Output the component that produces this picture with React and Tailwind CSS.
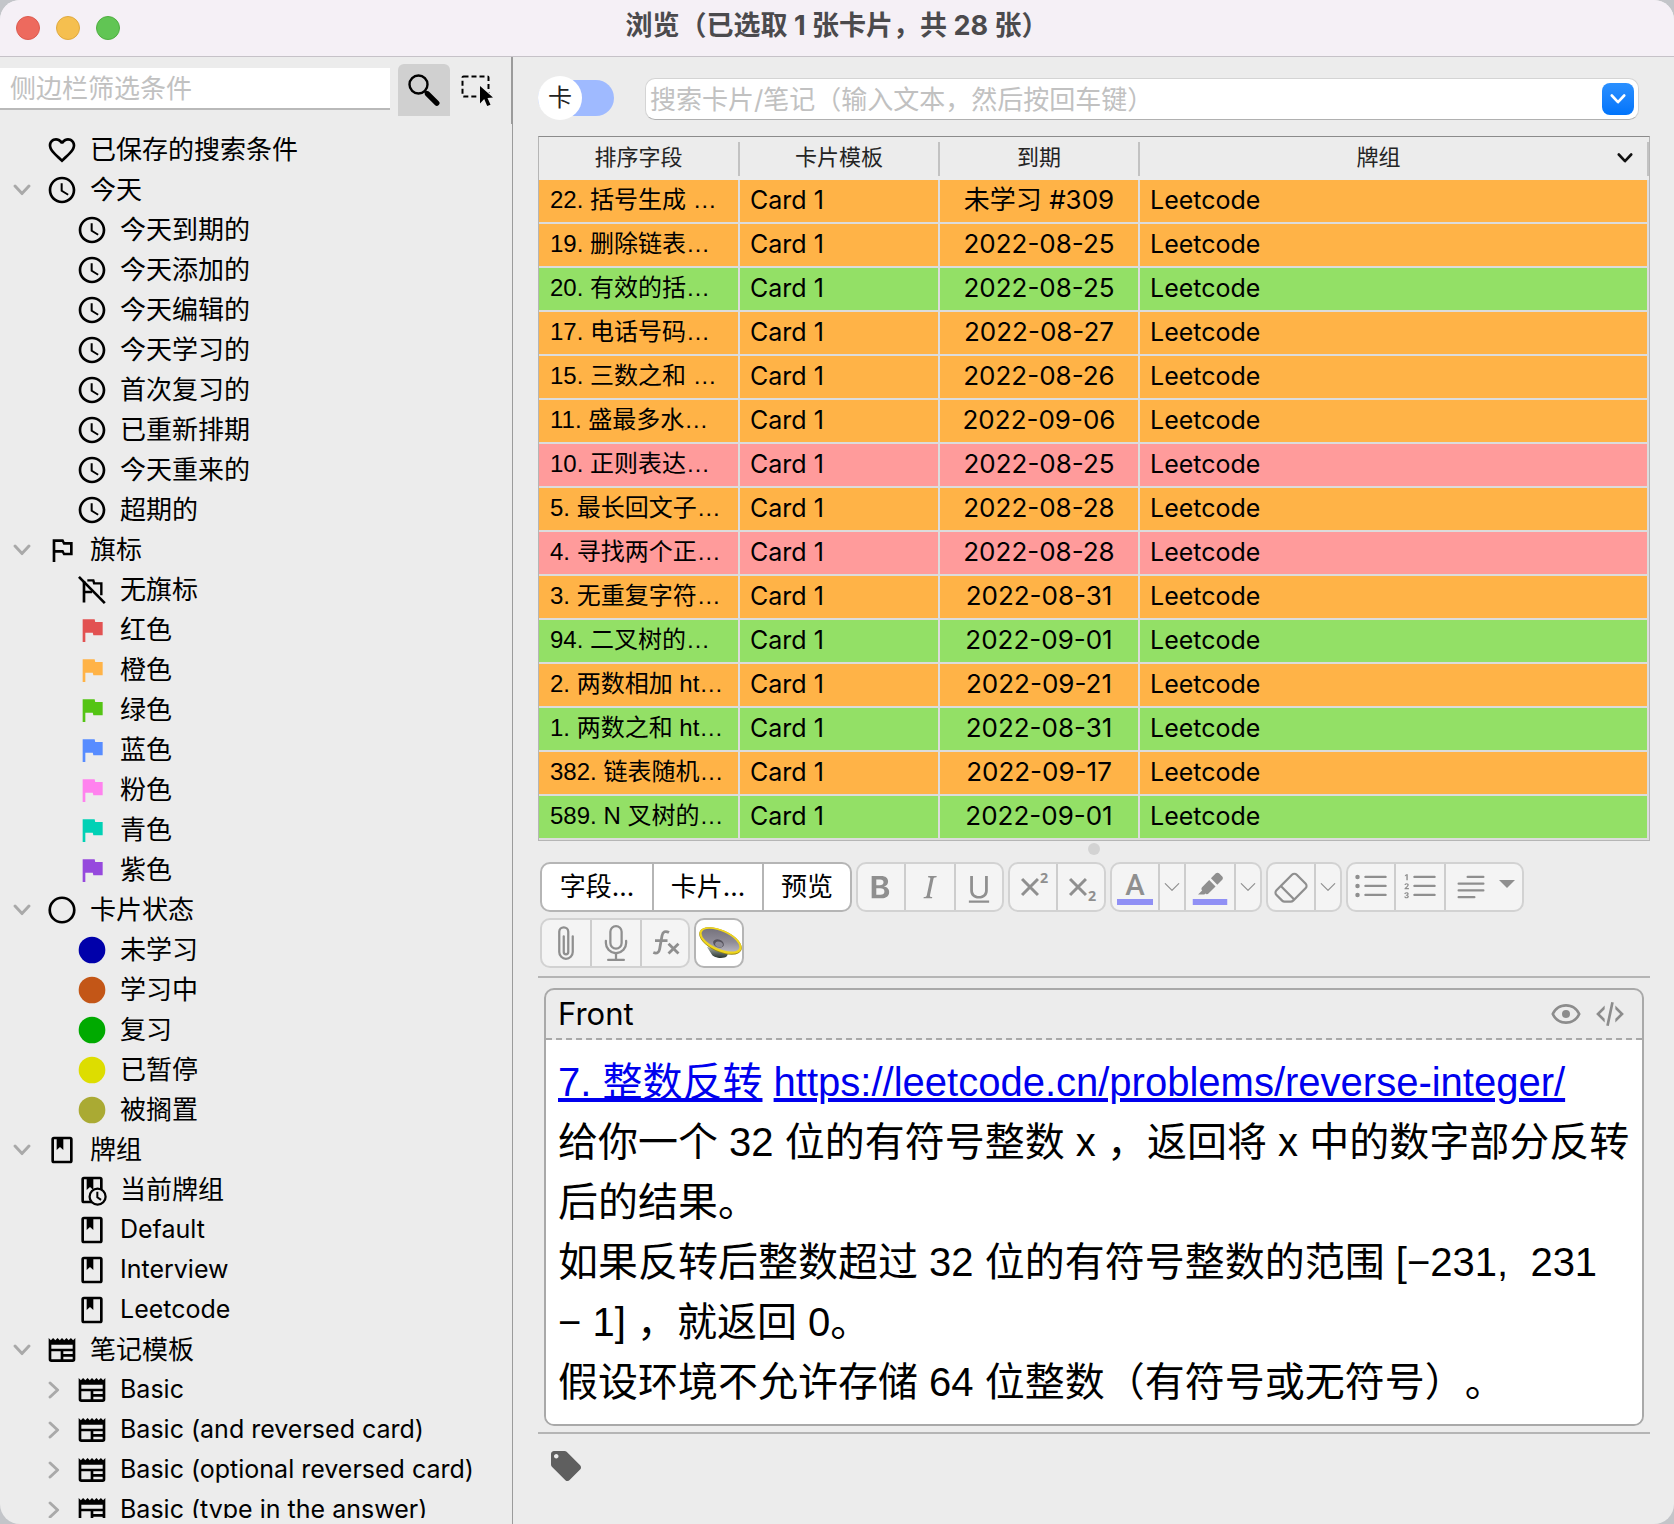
import React from "react";
import {
  MdFavoriteBorder,
  MdAccessTime,
  MdOutlinedFlag,
  MdFlag,
  MdLocalOffer,
} from "react-icons/md";
import {
  BsTypeBold,
  BsTypeItalic,
  BsTypeUnderline,
  BsChevronDown,
  BsEraser,
  BsListUl,
  BsListOl,
  BsTextParagraph,
  BsPaperclip,
  BsMic,
} from "react-icons/bs";

/* ---------- icons ---------- */

const Clock = () => <MdAccessTime className="size-8" />;
const Heart = () => <MdFavoriteBorder className="size-8" />;
const FlagOutline = () => <MdOutlinedFlag className="size-8" />;

const FlagOff = () => (
  <svg viewBox="0 0 24 24" className="size-8" fill="none" stroke="currentColor">
    <path d="M6 21.3V5.5M6 13.5h6" strokeWidth="2" />
    <path d="M8.5 4.8H13l.6 2.2H19v9" strokeWidth="1.8" />
    <path d="M2.2 2.2L21.6 21.8" strokeWidth="2" />
  </svg>
);

const CircleOutline = () => (
  <svg viewBox="0 0 24 24" className="size-8" fill="none" stroke="currentColor" strokeWidth="2">
    <circle cx="12" cy="12" r="9.2" />
  </svg>
);

const Disc = ({ color }) => (
  <svg viewBox="0 0 24 24" className="size-8" fill={color}>
    <circle cx="12" cy="12" r="10" />
  </svg>
);

const BOOK =
  "M18 2a2 2 0 0 1 2 2v16a2 2 0 0 1-2 2H6a2 2 0 0 1-2-2V4a2 2 0 0 1 2-2h12m0 2h-5v8l-2.5-2.25L8 12V4H6v16h12V4z";

const Book = () => (
  <svg viewBox="0 0 24 24" className="size-8" fill="currentColor" fillRule="evenodd">
    <path d={BOOK} />
  </svg>
);

const BookClock = () => (
  <svg viewBox="0 0 24 24" className="size-8 overflow-visible" fill="currentColor">
    <path fillRule="evenodd" d={BOOK} />
    <circle cx="16.2" cy="17" r="6" fill="#ececec" stroke="currentColor" strokeWidth="1.7" />
    <path d="M16 13.4v4l2.8 2" fill="none" stroke="currentColor" strokeWidth="1.5" />
  </svg>
);

const Newspaper = () => (
  <svg viewBox="0 0 24 24" className="size-8" fill="currentColor" fillRule="evenodd">
    <path d="M20 11H4V8h16v3zm0 4h-7v-2h7v2zm0 4h-7v-2h7v2zm-9 0H4v-6h7v6zM20.33 4.67L18.67 3 17 4.67 15.33 3l-1.66 1.67L12 3l-1.67 1.67L8.67 3 7 4.67 5.33 3 3.67 4.67 2 3v16a2 2 0 0 0 2 2h16a2 2 0 0 0 2-2V3l-1.67 1.67z" />
  </svg>
);

const Magnifier = () => (
  <svg viewBox="0 0 32 32" className="size-8" fill="none" stroke="currentColor">
    <circle cx="10.5" cy="10.5" r="9" strokeWidth="2.4" />
    <path d="M17.2 17.5l3 3" strokeWidth="3" />
    <path d="M19.5 19.8l9.3 9.3" strokeWidth="5.4" strokeLinecap="round" />
  </svg>
);

const SelectTool = () => (
  <svg viewBox="0 0 32 32" className="size-8">
    <rect x="1.5" y="1.5" width="26" height="20" rx="1" fill="none" stroke="currentColor" strokeWidth="2" strokeDasharray="5 3" />
    <path d="M17 8.500V29.500L22 24l3.600 8 4.800-2.200-3.600-7.600h7z" fill="#ececec" />
    <path d="M19 11v17.500l4.200-4.400 3 7 3.300-1.400-3-6.800 5.500-.3z" fill="currentColor" />
  </svg>
);

const Caret = ({ className }) => (
  <svg viewBox="0 0 16 16" className={className} fill="none" stroke="currentColor" strokeWidth="2.6" strokeLinecap="round" strokeLinejoin="round">
    <path d="M1.800 4.500L8 11.200l6.200-6.700" />
  </svg>
);

const Script = ({ y }) => (
  <svg viewBox="0 0 24 24" className="size-9" stroke="currentColor" strokeWidth="2" fill="none">
    <path d="M4.700 6.700L15.300 17.300M15.300 6.700L4.700 17.300" />
    <text x="16.700" y={y} fontSize="9.500" fontWeight="700" fontFamily="Open Sans, sans-serif" fill="currentColor" stroke="none">2</text>
  </svg>
);

const TextColor = () => (
  <svg viewBox="0 0 24 24" className="size-9">
    <text x="12" y="17" textAnchor="middle" fontSize="19.600" fontWeight="500" fontFamily="Roboto, sans-serif" fill="currentColor">A</text>
    <path d="M0 20h24v4H0z" fill="#9090f5" />
  </svg>
);

const Highlight = () => (
  <svg viewBox="0 0 24 24" className="size-9" fill="currentColor">
    <path d="M4 17l2.750-2.750-.03-.02c-.58-.59-.58-1.540 0-2.120l4.740-4.740 4.240 4.240-4.740 4.740c-.57.580-1.500.580-2.090.020L8.240 17H4M15.910 2.910c.59-.58 1.540-.58 2.120 0l2.130 2.120c.58.590.58 1.540 0 2.130l-3.300 3.290-4.240-4.240 3.290-3.300z" />
    <path d="M.5 20h23v4H.5z" fill="#9090f5" />
  </svg>
);

const Fx = () => (
  <svg viewBox="0 0 36 36" className="size-9" fill="none" stroke="currentColor" strokeWidth="2.800">
    <path d="M22 7.500c-3.500-2-6.200-.8-7 3.200l-2.400 13.500c-.7 3.800-3 4.600-6.300 3.300M8 15.600H20.500" />
    <path d="M21.500 18.800l10 9.800M31.500 18.800l-10 9.800" />
  </svg>
);

const Speaker = () => (
  <svg viewBox="0 0 44 36" className="h-9 w-11 shrink-0 overflow-visible">
    <defs>
      <linearGradient id="cone" x1="0" y1="0" x2="1" y2="1">
        <stop offset="0" stopColor="#6d6a74" />
        <stop offset=".55" stopColor="#8f8c97" />
        <stop offset="1" stopColor="#c9c7d0" />
      </linearGradient>
      <linearGradient id="magnet" x1="0" y1="0" x2="0" y2="1">
        <stop offset="0" stopColor="#a5ada8" />
        <stop offset="1" stopColor="#2a352f" />
      </linearGradient>
    </defs>
    <path d="M10 22l4.500 7c1.500 4 12.500 5.500 15.500 2l2-5z" fill="url(#magnet)" />
    <ellipse cx="23.500" cy="16" rx="22.800" ry="11" transform="rotate(24 23.500 16)" fill="#9a8a14" />
    <ellipse cx="23.500" cy="15.500" rx="22.500" ry="10.600" transform="rotate(24 23.500 15.500)" fill="#efd51d" />
    <ellipse cx="23.500" cy="15.200" rx="20.300" ry="8.600" transform="rotate(24 23.500 15.200)" fill="url(#cone)" />
    <ellipse cx="21.500" cy="18.500" rx="5.500" ry="4" transform="rotate(20 21.500 18.500)" fill="#55525c" />
    <ellipse cx="22" cy="19.500" rx="4" ry="2.800" transform="rotate(20 22 19.500)" fill="#8e8c97" />
  </svg>
);

const Eye = () => (
  <svg viewBox="0 0 24 24" className="size-8" fill="currentColor">
    <path d="M12 9a3 3 0 0 1 3 3 3 3 0 0 1-3 3 3 3 0 0 1-3-3 3 3 0 0 1 3-3m0-4.500c5 0 9.270 3.110 11 7.500-1.730 4.390-6 7.500-11 7.500S2.730 16.390 1 12c1.730-4.390 6-7.500 11-7.500M3.180 12a9.821 9.821 0 0 0 17.640 0 9.821 9.821 0 0 0-17.640 0z" />
  </svg>
);

const Code = () => (
  <svg viewBox="0 0 24 24" className="size-8" fill="currentColor">
    <path d="M12.890 3l1.960.4L11.110 21l-1.960-.4L12.890 3m6.700 9L16 8.410V5.580L22.420 12 16 18.410v-2.830L19.590 12M1.580 12L8 5.580v2.830L4.410 12 8 15.580v2.830L1.580 12z" />
  </svg>
);

/* ---------- data ---------- */

const flag = (color) => <MdFlag className="size-8" color={color} />;

const TREE = [
  { label: "已保存的搜索条件", icon: <Heart />, leaf: true, children: [] },
  {
    label: "今天",
    icon: <Clock />,
    children: ["今天到期的", "今天添加的", "今天编辑的", "今天学习的", "首次复习的", "已重新排期", "今天重来的", "超期的"].map(
      (label) => ({ label, icon: <Clock /> })
    ),
  },
  {
    label: "旗标",
    icon: <FlagOutline />,
    children: [
      { label: "无旗标", icon: <FlagOff /> },
      { label: "红色", icon: flag("#e25252") },
      { label: "橙色", icon: flag("#ffb347") },
      { label: "绿色", icon: flag("#54c414") },
      { label: "蓝色", icon: flag("#578cff") },
      { label: "粉色", icon: flag("#ff82ee") },
      { label: "青色", icon: flag("#00d1b5") },
      { label: "紫色", icon: flag("#9649dd") },
    ],
  },
  {
    label: "卡片状态",
    icon: <CircleOutline />,
    children: [
      { label: "未学习", icon: <Disc color="#0000aa" /> },
      { label: "学习中", icon: <Disc color="#c35617" /> },
      { label: "复习", icon: <Disc color="#00aa00" /> },
      { label: "已暂停", icon: <Disc color="#dddd00" /> },
      { label: "被搁置", icon: <Disc color="#aaaa33" /> },
    ],
  },
  {
    label: "牌组",
    icon: <Book />,
    children: [
      { label: "当前牌组", icon: <BookClock /> },
      { label: "Default", icon: <Book />, latin: true },
      { label: "Interview", icon: <Book />, latin: true },
      { label: "Leetcode", icon: <Book />, latin: true },
    ],
  },
  {
    label: "笔记模板",
    icon: <Newspaper />,
    children: [
      "Basic",
      "Basic (and reversed card)",
      "Basic (optional reversed card)",
      "Basic (type in the answer)",
    ].map((label) => ({ label, icon: <Newspaper />, latin: true, closed: true })),
  },
];

const O = "bg-[#ffb347]";
const G = "bg-[#93e066]";
const R = "bg-[#ff9b9b]";

const CARDS = [
  ["22. 括号生成 …", "未学习 #309", O],
  ["19. 删除链表…", "2022-08-25", O],
  ["20. 有效的括…", "2022-08-25", G],
  ["17. 电话号码…", "2022-08-27", O],
  ["15. 三数之和 …", "2022-08-26", O],
  ["11. 盛最多水…", "2022-09-06", O],
  ["10. 正则表达…", "2022-08-25", R],
  ["5. 最长回文子…", "2022-08-28", O],
  ["4. 寻找两个正…", "2022-08-28", R],
  ["3. 无重复字符…", "2022-08-31", O],
  ["94. 二叉树的…", "2022-09-01", G],
  ["2. 两数相加 ht…", "2022-09-21", O],
  ["1. 两数之和 ht…", "2022-08-31", G],
  ["382. 链表随机…", "2022-09-17", O],
  ["589. N 叉树的…", "2022-09-01", G],
];

/* ---------- sidebar ---------- */

function TreeRow({ item, child }) {
  return (
    <button
      type="button"
      className={`flex h-10 w-full items-center text-left whitespace-nowrap ${child ? "pl-[42px]" : "pl-2.5"}`}
    >
      <span className={`flex w-6 shrink-0 justify-center text-[#a9a9a9] ${child ? "mr-2.5" : "mr-3"}`}>
        {child
          ? item.closed && <Caret className="size-[18px] -rotate-90" />
          : !item.leaf && <Caret className="size-[18px]" />}
      </span>
      <span className="mr-3 shrink-0">{item.icon}</span>
      <span className={item.latin ? "text-[25px]" : "pb-0.5 text-[26px]"}>{item.label}</span>
    </button>
  );
}

function Sidebar() {
  return (
    <aside className="flex w-[513px] shrink-0 flex-col border-r border-[#9b9b9b] pb-1.5">
      <div className="flex h-[67px] shrink-0 items-start border-r border-[#9b9b9b] pt-[7px]">
        <input
          type="text"
          aria-label="侧边栏筛选条件"
          placeholder="侧边栏筛选条件"
          className="mt-1 h-[42px] min-w-0 flex-1 border-b-2 border-[#b9b9b9] bg-white pl-2.5 text-[26px] outline-none placeholder:text-[#c1c1c1]"
        />
        <button type="button" aria-label="搜索" className="ml-2 flex size-[52px] items-center justify-center rounded-t-md bg-[#d0d0d0]">
          <Magnifier />
        </button>
        <button type="button" aria-label="选择" className="mr-[7px] flex size-[54px] items-center justify-center">
          <SelectTool />
        </button>
      </div>
      <nav className="mt-1.5 min-h-0 flex-1 overflow-hidden">
        {TREE.map((group) => (
          <div key={group.label}>
            <TreeRow item={group} />
            {group.children.map((c) => (
              <TreeRow key={c.label} item={c} child />
            ))}
          </div>
        ))}
      </nav>
    </aside>
  );
}

/* ---------- card table ---------- */

function HeaderCell({ children, sorted }) {
  return (
    <th className="h-[43px] p-0 font-normal">
      <div className="flex h-[34px] items-center border-r-2 border-[#c2c2c2] pb-0.5 text-[22px] text-[#242424]">
        <span className="flex-1 text-center">{children}</span>
        {sorted && <Caret className="mr-3.5 size-4 text-[#111]" />}
      </div>
    </th>
  );
}

const CELL = "h-11 border-r-2 border-b-2 border-[#dcdcdc] pt-0 pr-0 pb-0.5 whitespace-nowrap overflow-hidden";

function CardTable() {
  return (
    <div className="border border-t-[#8b8b8b] border-r-[#b5b5b5] border-b-[#b5b5b5] border-l-[#b5b5b5]">
      <table className="w-full table-fixed border-separate border-spacing-0">
        <colgroup>
          <col className="w-[201px]" />
          <col className="w-[200px]" />
          <col className="w-[200px]" />
          <col />
        </colgroup>
        <thead>
          <tr>
            <HeaderCell>排序字段</HeaderCell>
            <HeaderCell>卡片模板</HeaderCell>
            <HeaderCell>到期</HeaderCell>
            <HeaderCell sorted>牌组</HeaderCell>
          </tr>
        </thead>
        <tbody>
          {CARDS.map(([title, due, bg]) => (
            <tr key={title} className={bg}>
              <td className={`${CELL} pl-[11px] font-['Liberation_Sans','Noto_Sans_CJK_SC',sans-serif] text-[24px] leading-8`}>{title}</td>
              <td className={`${CELL} pl-2.5 text-[25px] leading-8`}>Card 1</td>
              <td className={`${CELL} pl-0 text-center text-[26px] leading-8`}>{due}</td>
              <td className={`${CELL} pl-2.5 text-[25px] leading-8`}>Leetcode</td>
            </tr>
          ))}
        </tbody>
      </table>
    </div>
  );
}

/* ---------- editor ---------- */

const Group = ({ children, active }) => (
  <div
    className={
      active
        ? "flex h-[50px] divide-x-2 divide-[#b5b5b5] overflow-hidden rounded-[10px] border-2 border-[#b5b5b5] bg-white"
        : "flex h-[50px] divide-x-2 divide-[#cdcdcd] overflow-hidden rounded-[10px] border-2 border-[#d2d2d2] bg-[#f4f4f4] text-[#8f8f8f]"
    }
  >
    {children}
  </div>
);

const Tool = ({ label, width = "w-12", children }) => (
  <button type="button" aria-label={label} className={`box-content flex shrink-0 items-center justify-center ${width}`}>
    {children}
  </button>
);

const Text = ({ width, children }) => (
  <button type="button" className={`box-content shrink-0 text-center text-[26px] leading-none ${width}`}>
    {children}
  </button>
);

const Drop = ({ label }) => (
  <Tool label={label} width="w-6">
    <BsChevronDown className="size-[18px]" />
  </Tool>
);

function Toolbar() {
  return (
    <div className="ml-0.5 flex flex-wrap gap-x-1 gap-y-1.5">
      <Group active>
        <Text width="w-[110px]">字段...</Text>
        <Text width="w-[108px]">卡片...</Text>
        <Text width="w-[86px]">预览</Text>
      </Group>
      <Group>
        <Tool label="粗体" width="w-[46px]"><BsTypeBold className="size-9" /></Tool>
        <Tool label="斜体"><BsTypeItalic className="size-9" /></Tool>
        <Tool label="下划线" width="w-[46px]"><BsTypeUnderline className="size-9" /></Tool>
      </Group>
      <Group>
        <Tool label="上标" width="w-[46px]"><Script y="9" /></Tool>
        <Tool label="下标" width="w-[46px]"><Script y="21" /></Tool>
      </Group>
      <Group>
        <Tool label="文字颜色" width="w-[46px]"><TextColor /></Tool>
        <Drop label="选择文字颜色" />
        <Tool label="高亮颜色"><Highlight /></Tool>
        <Drop label="选择高亮颜色" />
      </Group>
      <Group>
        <Tool label="清除格式" width="w-[46px]"><BsEraser className="size-9" /></Tool>
        <Drop label="选择要清除的格式" />
      </Group>
      <Group>
        <Tool label="无序列表" width="w-[46px]"><BsListUl className="size-9" /></Tool>
        <Tool label="有序列表"><BsListOl className="size-9" /></Tool>
        <Tool label="对齐" width="w-[76px]">
          <span className="flex items-center gap-2.5">
            <BsTextParagraph className="size-9" />
            <svg viewBox="0 0 16 14" className="h-3.5 w-4" fill="currentColor"><path d="M0 0h16L8 8z" /></svg>
          </span>
        </Tool>
      </Group>
    </div>
  );
}

function MediaBar() {
  return (
    <div className="mt-1.5 ml-0.5 flex flex-wrap gap-x-1">
      <Group>
        <Tool label="附件"><BsPaperclip className="size-9" /></Tool>
        <Tool label="录音"><BsMic className="size-9" /></Tool>
        <Tool label="公式" width="w-[46px]"><Fx /></Tool>
      </Group>
      <Group active>
        <Tool label="朗读" width="w-[46px]"><Speaker /></Tool>
      </Group>
    </div>
  );
}

function Field() {
  return (
    <section className="mx-1.5 mt-2.5 overflow-hidden rounded-[10px] border-2 border-[#a9a9a9]">
      <header className="flex h-[50px] items-center gap-3 border-b-2 border-dashed border-[#a9a9a9] pr-4 pl-3 text-[#8c8c8c]">
        <h2 className="flex-1 text-[31px] text-black">Front</h2>
        <button type="button" aria-label="预览字段"><Eye /></button>
        <button type="button" aria-label="编辑 HTML"><Code /></button>
      </header>
      <div className="bg-white p-3 font-['Liberation_Sans','Noto_Sans_CJK_SC',sans-serif] text-[40px] leading-[60px]">
        <p>
          <a href="#problem" className="text-[#0000ee] underline">7. 整数反转</a>{" "}
          <a href="https://leetcode.cn/problems/reverse-integer/" className="text-[#0000ee] underline">https://leetcode.cn/problems/reverse-integer/</a>
        </p>
        <p>给你一个 32 位的有符号整数 x ，返回将 x 中的数字部分反转后的结果。</p>
        <p>{"如果反转后整数超过 32 位的有符号整数的范围 [−231,\u00a0 231 − 1] ，就返回 0。"}</p>
        <p>假设环境不允许存储 64 位整数（有符号或无符号）。</p>
      </div>
    </section>
  );
}

/* ---------- window ---------- */

export default function App() {
  return (
    <div className="h-screen bg-[#c3c5c9]">
      <div className="flex h-full flex-col overflow-hidden rounded-[20px] bg-[#ececec] font-['Inter','Noto_Sans_CJK_SC',sans-serif] text-black [text-spacing-trim:space-all]">
        <header className="flex h-[57px] shrink-0 items-center border-b border-[#c6c2c8] bg-[#f5f0f6] px-4">
          <div className="flex flex-1 gap-4">
            <button type="button" aria-label="关闭" className="size-6 rounded-full border border-[#dc5b50] bg-[#ed6a5e]" />
            <button type="button" aria-label="最小化" className="size-6 rounded-full border border-[#dfa93f] bg-[#f5bf4f]" />
            <button type="button" aria-label="缩放" className="size-6 rounded-full border border-[#4fae41] bg-[#61c554]" />
          </div>
          <h1 className="pb-1 text-[27px] font-bold text-[#4b4a4d]">浏览（已选取 1 张卡片，共 28 张）</h1>
          <div className="flex-1" />
        </header>

        <div className="flex min-h-0 flex-1">
          <Sidebar />
          <main className="min-w-0 flex-1 pt-[19px] pr-6 pl-[25px]">
            <div className="mb-4 flex h-11 items-center">
              <label className="flex shrink-0 items-center">
                <input type="checkbox" role="switch" aria-label="卡片/笔记" className="peer sr-only" />
                <span className="flex h-9 w-[76px] items-center rounded-full bg-[#9fbaff]">
                  <span className="flex size-11 shrink-0 items-center justify-center rounded-full bg-white text-[24px] text-[#222]">卡</span>
                </span>
              </label>
              <div className="mr-[11px] ml-[31px] flex h-[42px] min-w-0 flex-1 items-center self-end rounded-[10px] border border-[#d4d4d4] border-b-[#b0b0b0] bg-white pr-1">
                <input
                  type="text"
                  aria-label="搜索卡片/笔记"
                  placeholder="搜索卡片/笔记（输入文本，然后按回车键）"
                  className="h-full min-w-0 flex-1 bg-transparent pl-1 text-[26px] outline-none placeholder:text-[#c1c1c1]"
                />
                <button type="button" aria-label="搜索历史" className="flex size-8 items-center justify-center rounded-lg bg-linear-to-b from-[#2a90ff] to-[#0074fb] text-white">
                  <Caret className="size-4" />
                </button>
              </div>
            </div>

            <CardTable />
            <div className="mx-auto mt-0.5 mb-[7px] size-3 rounded-full bg-[#d3d3d3]" />
            <Toolbar />
            <MediaBar />
            <hr className="mt-2 border-t-2 border-[#b5b5b5]" />
            <Field />
            <hr className="mt-1.5 border-t-2 border-[#b5b5b5]" />
            <button type="button" aria-label="标签" className="mt-3.5 ml-2.5 block text-[#5f5f5f]">
              <MdLocalOffer className="size-9" />
            </button>
          </main>
        </div>
      </div>
    </div>
  );
}
